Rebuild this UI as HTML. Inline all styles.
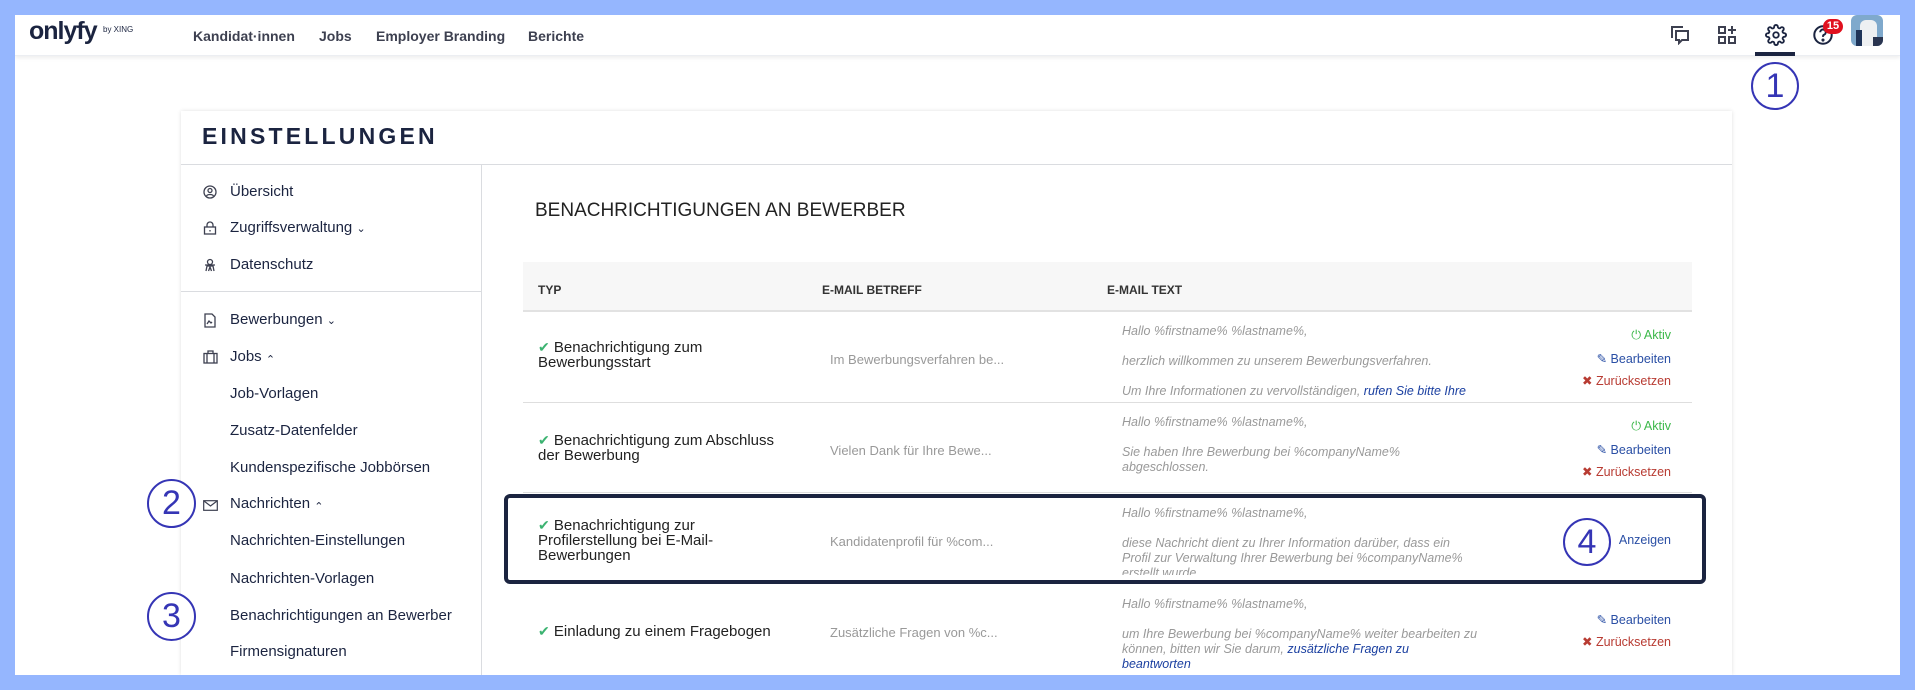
<!DOCTYPE html>
<html><head><meta charset="utf-8"><style>
*{box-sizing:border-box;margin:0;padding:0}
body{width:1915px;height:690px;background:#95b6fe;position:relative;overflow:hidden;font-family:"Liberation Sans",sans-serif}
.a{position:absolute;white-space:nowrap}
#page{position:absolute;left:15px;top:15px;width:1885px;height:660px;background:#fff;overflow:hidden}
#nav{position:absolute;left:0;top:0;width:1885px;height:41px;background:#fff;box-shadow:0 2px 4px rgba(0,0,0,.07);border-bottom:1px solid #eceef2}
.nv{font-size:14px;font-weight:bold;color:#3d4050;top:13px}
.circ{position:absolute;border:2px solid #3535b5;border-radius:50%;color:#3535b5;font-size:34px;text-align:center;font-family:"Liberation Sans",sans-serif;background:#fff}
#card{position:absolute;left:166px;top:96px;width:1551px;height:564px;background:#fff;box-shadow:0 0 4px rgba(0,0,0,.12)}
.si{font-size:15px;color:#1b2440;left:49px}
.ic{left:22px}
.th{font-size:12px;font-weight:bold;color:#333;top:283px}
.tt{font-size:15px;color:#222;line-height:15px;left:557px}
.ck{color:#3cb371;font-size:14px}
.sb{font-size:13px;color:#999;left:830px}
.et{font-size:12.5px;color:#999;font-style:italic;left:1122px;line-height:15px}
.lk{color:#1a3fa0}
.act{font-size:12.5px;right:244px;text-align:right}
.g{color:#3cb84a}.b{color:#2a4fa5}.r{color:#b83b32}
.hr{position:absolute;left:523px;width:1169px;height:1px;background:#dedede}
</style></head><body>
<div id="page">
<div id="nav">
 <div class="a" style="left:14px;top:2px;font-size:25px;font-weight:bold;color:#1b2440;letter-spacing:-1px">onlyfy</div>
 <div class="a" style="left:88px;top:10px;font-size:8px;color:#1b2440">by XING</div>
 <div class="a nv" style="left:178px">Kandidat·innen</div>
 <div class="a nv" style="left:304px">Jobs</div>
 <div class="a nv" style="left:361px">Employer Branding</div>
 <div class="a nv" style="left:513px">Berichte</div>
 <svg class="a" style="left:1655px;top:10px" width="20" height="20" viewBox="0 0 20 20" fill="none" stroke="#3d4050" stroke-width="2"><path d="M2 13V2h11"/><path d="M6 6h12v9h-6l-3 3v-3H6z"/></svg>
 <svg class="a" style="left:1702px;top:10px" width="20" height="20" viewBox="0 0 20 20" fill="none" stroke="#3d4050" stroke-width="2"><rect x="2" y="2" width="6" height="6"/><rect x="2" y="12" width="6" height="6"/><rect x="12" y="12" width="6" height="6"/><path d="M15 1v8M11 5h8"/></svg>
 <svg class="a" style="left:1750px;top:9px" width="22" height="22" viewBox="0 0 24 24" fill="none" stroke="#1b2440" stroke-width="2"><circle cx="12" cy="12" r="3"/><path d="M19.4 15a1.7 1.7 0 0 0 .3 1.8l.1.1a2 2 0 1 1-2.8 2.8l-.1-.1a1.7 1.7 0 0 0-1.8-.3 1.7 1.7 0 0 0-1 1.5V21a2 2 0 1 1-4 0v-.1a1.7 1.7 0 0 0-1.1-1.5 1.7 1.7 0 0 0-1.8.3l-.1.1a2 2 0 1 1-2.8-2.8l.1-.1a1.7 1.7 0 0 0 .3-1.8 1.7 1.7 0 0 0-1.5-1H3a2 2 0 1 1 0-4h.1a1.7 1.7 0 0 0 1.5-1.1 1.7 1.7 0 0 0-.3-1.8l-.1-.1a2 2 0 1 1 2.8-2.8l.1.1a1.7 1.7 0 0 0 1.8.3H9a1.7 1.7 0 0 0 1-1.5V3a2 2 0 1 1 4 0v.1a1.7 1.7 0 0 0 1 1.5 1.7 1.7 0 0 0 1.8-.3l.1-.1a2 2 0 1 1 2.8 2.8l-.1.1a1.7 1.7 0 0 0-.3 1.8V9a1.7 1.7 0 0 0 1.5 1H21a2 2 0 1 1 0 4h-.1a1.7 1.7 0 0 0-1.5 1z"/></svg>
 <div class="a" style="left:1740px;top:37px;width:40px;height:4px;background:#1b2440"></div>
 <svg class="a" style="left:1797px;top:9px" width="22" height="22" viewBox="0 0 24 24" fill="none" stroke="#1b2440" stroke-width="2.2"><circle cx="12" cy="12" r="9.5"/><path d="M9 9a3 3 0 1 1 4 2.8c-1 .4-1 1.2-1 2.2"/><circle cx="12" cy="17.5" r=".6" fill="#1b2440"/></svg>
 <div class="a" style="left:1808px;top:4px;width:20px;height:15px;border-radius:8px;background:#e0101e;color:#fff;font-size:11px;font-weight:bold;text-align:center;line-height:15px">15</div>
 <div class="a" style="left:1836px;top:0px;width:32px;height:31px;border-radius:6px;background:#7fa9cc;overflow:hidden">
  <div style="position:absolute;left:9px;top:5px;width:17px;height:26px;background:#eef0f2;border-radius:6px 6px 0 0"></div>
  <div style="position:absolute;left:5px;top:15px;width:6px;height:16px;background:#1e3358"></div>
  <div style="position:absolute;left:22px;top:22px;width:10px;height:9px;background:#2a3550"></div>
 </div>
</div>

<div id="card">
 <div class="a" style="left:21px;top:12px;font-size:23px;font-weight:bold;color:#1b2440;letter-spacing:3.2px">EINSTELLUNGEN</div>
 <div class="a" style="left:0;top:53px;width:1551px;height:1px;background:#dadce0"></div>
 <div class="a" style="left:300px;top:54px;width:1px;height:520px;background:#dadce0"></div>
 <div class="a" style="left:0;top:180px;width:300px;height:1px;background:#dadce0"></div>
 <svg class="a ic" style="top:74px" width="14" height="14" viewBox="0 0 14 14" fill="none" stroke="#3d4050" stroke-width="1.3"><circle cx="7" cy="7" r="6"/><circle cx="7" cy="5.5" r="2"/><path d="M3.5 11c1-2 6-2 7 0"/></svg>
 <div class="a si" style="top:72px">Übersicht</div>
 <svg class="a ic" style="top:110px" width="14" height="14" viewBox="0 0 14 14" fill="none" stroke="#3d4050" stroke-width="1.3"><rect x="1.5" y="6" width="11" height="7"/><path d="M4 6V4a3 3 0 0 1 6 0v2"/><path d="M7 9v1.5"/></svg>
 <div class="a si" style="top:108px">Zugriffsverwaltung <span style="font-size:11px">&#8964;</span></div>
 <svg class="a ic" style="top:147px" width="14" height="14" viewBox="0 0 14 14" fill="none" stroke="#3d4050" stroke-width="1.3"><circle cx="7" cy="4" r="2.5"/><path d="M2 7h10M3 13l1-5h6l1 5M5.5 13l1.5-4 1.5 4"/></svg>
 <div class="a si" style="top:145px">Datenschutz</div>
 <svg class="a ic" style="top:202px" width="14" height="15" viewBox="0 0 14 15" fill="none" stroke="#3d4050" stroke-width="1.3"><path d="M2 1h7l3 3v10H2z"/><path d="M4 11l2-3 2 2 1-1"/></svg>
 <div class="a si" style="top:200px">Bewerbungen <span style="font-size:11px">&#8964;</span></div>
 <svg class="a ic" style="top:239px" width="15" height="14" viewBox="0 0 15 14" fill="none" stroke="#3d4050" stroke-width="1.3"><rect x="1" y="3.5" width="13" height="9.5"/><path d="M5 3.5V1h5v2.5M4 3.5V13M11 3.5V13"/></svg>
 <div class="a si" style="top:237px">Jobs <span style="font-size:11px;position:relative;top:2px">&#8963;</span></div>
 <div class="a si" style="top:274px">Job-Vorlagen</div>
 <div class="a si" style="top:311px">Zusatz-Datenfelder</div>
 <div class="a si" style="top:348px">Kundenspezifische Jobbörsen</div>
 <svg class="a ic" style="top:389px" width="15" height="11" viewBox="0 0 15 11" fill="none" stroke="#3d4050" stroke-width="1.2"><rect x=".7" y=".7" width="13.6" height="9.6"/><path d="M1 1l6.5 5L14 1"/></svg>
 <div class="a si" style="top:384px">Nachrichten <span style="font-size:11px;position:relative;top:2px">&#8963;</span></div>
 <div class="a si" style="top:421px">Nachrichten-Einstellungen</div>
 <div class="a si" style="top:459px">Nachrichten-Vorlagen</div>
 <div class="a si" style="top:496px">Benachrichtigungen an Bewerber</div>
 <div class="a si" style="top:532px">Firmensignaturen</div>
</div>

<div class="circ" style="left:1736px;top:47px;width:48px;height:48px;line-height:44px">1</div>
<div class="circ" style="left:132px;top:464px;width:49px;height:49px;line-height:45px">2</div>
<div class="circ" style="left:132px;top:577px;width:49px;height:49px;line-height:45px">3</div>

<div class="a" style="left:520px;top:185px;font-size:19px;color:#222">BENACHRICHTIGUNGEN AN BEWERBER</div>
<div class="a" style="left:508px;top:247px;width:1169px;height:50px;background:#f7f7f7;border-bottom:2px solid #e2e2e2"></div>
<div class="a th" style="left:523px;top:268px">TYP</div>
<div class="a th" style="left:807px;top:268px">E-MAIL BETREFF</div>
<div class="a th" style="left:1092px;top:268px">E-MAIL TEXT</div>
</div>

<div class="hr" style="top:402px"></div>
<div class="hr" style="top:492px"></div>

<div class="a tt" style="left:538px;top:340px"><span class="ck">&#10004;</span> Benachrichtigung zum<br>Bewerbungsstart</div>
<div class="a sb" style="top:352px">Im Bewerbungsverfahren be...</div>
<div class="a et" style="top:324px;height:73px;overflow:hidden">Hallo %firstname% %lastname%,<br><br>herzlich willkommen zu unserem Bewerbungsverfahren.<br><br>Um Ihre Informationen zu vervollständigen, <span class="lk">rufen Sie bitte Ihre</span></div>
<div class="a act g" style="top:328px">&#x23FB; Aktiv</div>
<div class="a act b" style="top:351px">&#9998; Bearbeiten</div>
<div class="a act r" style="top:373px">&#10006; Zurücksetzen</div>

<div class="a tt" style="left:538px;top:433px"><span class="ck">&#10004;</span> Benachrichtigung zum Abschluss<br>der Bewerbung</div>
<div class="a sb" style="top:443px">Vielen Dank für Ihre Bewe...</div>
<div class="a et" style="top:415px">Hallo %firstname% %lastname%,<br><br>Sie haben Ihre Bewerbung bei %companyName%<br>abgeschlossen.</div>
<div class="a act g" style="top:419px">&#x23FB; Aktiv</div>
<div class="a act b" style="top:442px">&#9998; Bearbeiten</div>
<div class="a act r" style="top:464px">&#10006; Zurücksetzen</div>

<div class="a" style="left:504px;top:494px;width:1202px;height:90px;border:4px solid #1b2440;border-radius:6px"></div>
<div class="a tt" style="left:538px;top:518px"><span class="ck">&#10004;</span> Benachrichtigung zur<br>Profilerstellung bei E-Mail-<br>Bewerbungen</div>
<div class="a sb" style="top:534px">Kandidatenprofil für %com...</div>
<div class="a et" style="top:506px;height:69px;overflow:hidden">Hallo %firstname% %lastname%,<br><br>diese Nachricht dient zu Ihrer Information darüber, dass ein<br>Profil zur Verwaltung Ihrer Bewerbung bei %companyName%<br>erstellt wurde.</div>
<div class="circ" style="left:1563px;top:518px;width:48px;height:48px;line-height:44px">4</div>
<div class="a act b" style="top:533px">Anzeigen</div>

<div class="a tt" style="left:538px;top:624px"><span class="ck">&#10004;</span> Einladung zu einem Fragebogen</div>
<div class="a sb" style="top:625px">Zusätzliche Fragen von %c...</div>
<div class="a et" style="top:597px;height:78px;overflow:hidden">Hallo %firstname% %lastname%,<br><br>um Ihre Bewerbung bei %companyName% weiter bearbeiten zu<br>können, bitten wir Sie darum, <span class="lk">zusätzliche Fragen zu</span><br><span class="lk">beantworten</span></div>
<div class="a act b" style="top:612px">&#9998; Bearbeiten</div>
<div class="a act r" style="top:634px">&#10006; Zurücksetzen</div>

<div class="a" style="left:0;top:675px;width:1915px;height:15px;background:#95b6fe"></div>
<div class="a" style="left:1900px;top:0;width:15px;height:690px;background:#95b6fe"></div>
</body></html>
